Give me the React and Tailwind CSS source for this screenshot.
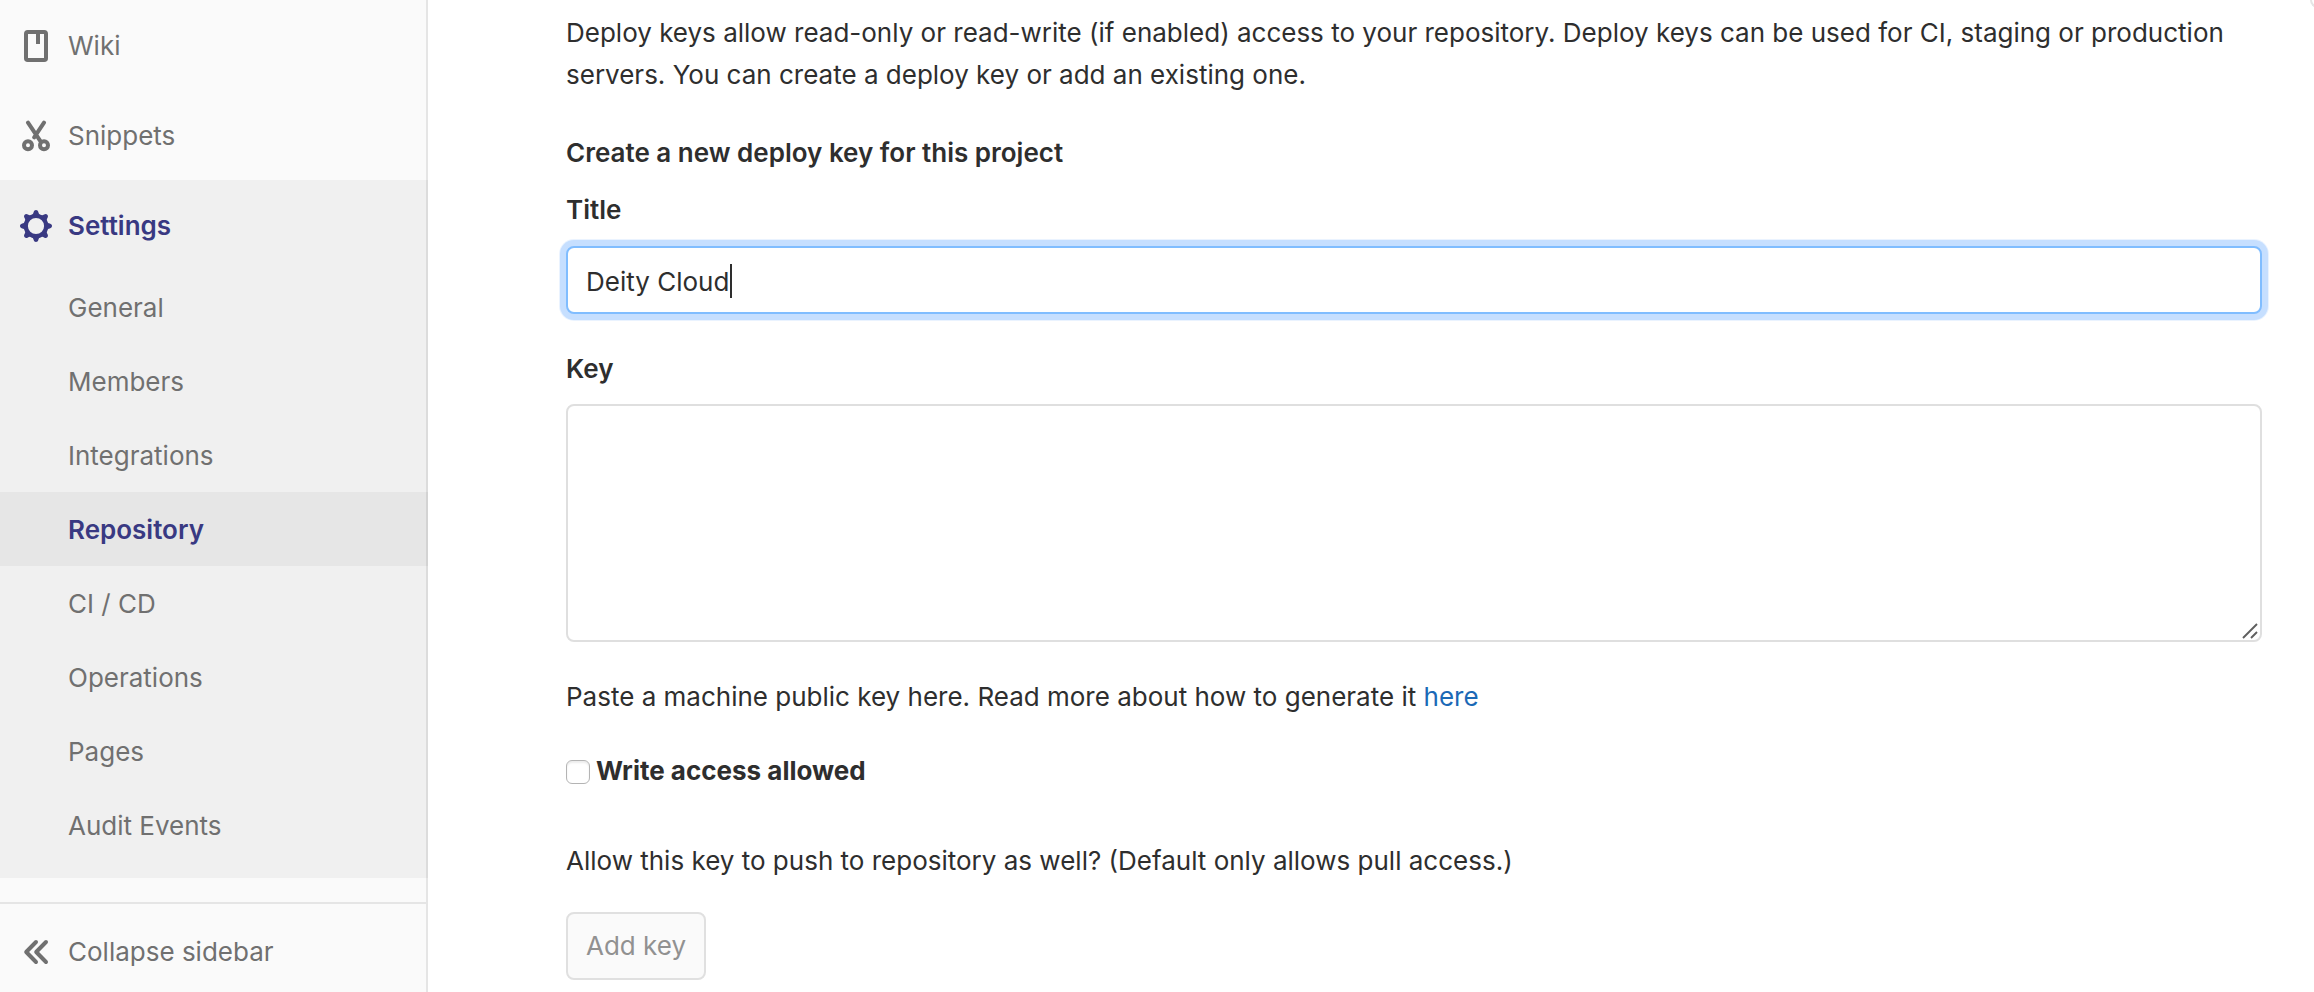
import React, { useState } from "react";

function BookIcon() {
  return (
    <svg viewBox="0 0 16 16" className="size-8 shrink-0" fill="none" aria-hidden="true">
      <rect x="3" y="1" width="10" height="14" rx="0.9" stroke="currentColor" strokeWidth="2" />
      <path d="M8 1.5h2V7H8z" fill="currentColor" />
    </svg>
  );
}

function ScissorsIcon() {
  return (
    <svg viewBox="0 0 16 16" className="size-8 shrink-0" fill="none" stroke="currentColor" aria-hidden="true">
      <path d="M4 1.3 10.2 10.6M12 1.3 7.1 8.7" strokeWidth="2" strokeLinecap="round" />
      <circle cx="4" cy="12.6" r="2" strokeWidth="2" />
      <circle cx="12" cy="12.6" r="2" strokeWidth="2" />
    </svg>
  );
}

const TOOTH_ANGLES = [0, 45, 90, 135, 180, 225, 270, 315];

function GearIcon() {
  return (
    <svg viewBox="0 0 16 16" className="size-8 shrink-0" fill="currentColor" aria-hidden="true">
      <circle cx="8" cy="8" r="5.1" fill="none" stroke="currentColor" strokeWidth="2.1" />
      {TOOTH_ANGLES.map((angle) => (
        <path
          key={angle}
          transform={`rotate(${angle} 8 8)`}
          d="M5.5 2.9C6.3 2.4 6.6 1.9 6.8 1.1 7 .4 7.4 0 8 0s1 .4 1.2 1.1c.2.8.5 1.3 1.3 1.8z"
        />
      ))}
    </svg>
  );
}

function CollapseIcon() {
  return (
    <svg
      viewBox="0 0 16 16"
      className="size-8 shrink-0"
      fill="none"
      stroke="currentColor"
      strokeWidth="2"
      strokeLinecap="round"
      strokeLinejoin="round"
      aria-hidden="true"
    >
      <path d="M8 3 3.1 8 8 13M13 3 8.1 8 13 13" />
    </svg>
  );
}

const SETTINGS_LINKS = [
  "General",
  "Members",
  "Integrations",
  "Repository",
  "CI / CD",
  "Operations",
  "Pages",
  "Audit Events",
];

function NavLink({ icon, label, active }) {
  return (
    <a
      href="#"
      className={`flex h-[90px] items-center gap-4 pt-0.5 pl-5 ${active ? "font-semibold text-[#393982]" : ""}`}
    >
      {icon}
      <span>{label}</span>
    </a>
  );
}

function Sidebar() {
  return (
    <nav className="flex w-[428px] shrink-0 flex-col bg-[#fafafa] text-[#707070] shadow-[inset_-2px_0_0_#e5e5e5]">
      <NavLink icon={<BookIcon />} label="Wiki" />
      <NavLink icon={<ScissorsIcon />} label="Snippets" />
      <div className="bg-black/4 pb-4">
        <NavLink icon={<GearIcon />} label="Settings" active />
        <ul>
          {SETTINGS_LINKS.map((label) => (
            <li key={label}>
              <a
                href="#"
                className={`flex h-[74px] items-center pt-0.5 pl-[68px] ${
                  label === "Repository" ? "bg-black/4 font-semibold text-[#393982]" : ""
                }`}
              >
                {label}
              </a>
            </li>
          ))}
        </ul>
      </div>
      <button
        type="button"
        className="mt-6 mr-0.5 flex h-[90px] items-center gap-4 border-t-2 border-[#e5e5e5] pt-2 pl-5 text-left"
      >
        <CollapseIcon />
        <span>Collapse sidebar</span>
      </button>
    </nav>
  );
}

export default function App() {
  const [title, setTitle] = useState("Deity Cloud");

  return (
    <div className="flex min-h-screen bg-white font-['Inter','Liberation_Sans',sans-serif] text-[26px] leading-[42px] text-[#2e2e2e]">
      <Sidebar />
      <main className="relative min-w-0 flex-1 overflow-hidden pt-3 pr-[52px] pl-[138px]">
        <div
          className="absolute top-0 -right-[60px] h-2 w-16 rounded-bl-lg border-b-2 border-l-2 border-[#e5e5e5]"
          aria-hidden="true"
        />
        <p>
          Deploy keys allow read-only or read-write (if enabled) access to your repository. Deploy keys can be used
          for CI, staging or production servers. You can create a deploy key or add an existing one.
        </p>
        <form onSubmit={(event) => event.preventDefault()}>
          <h5 className="mt-9 font-semibold">Create a new deploy key for this project</h5>

          <label htmlFor="deploy-key-title" className="mt-[15px] block font-semibold">
            Title
          </label>
          <div className="relative mt-[15px]">
            <input
              id="deploy-key-title"
              type="text"
              value={title}
              onChange={(event) => setTitle(event.target.value)}
              className="block h-[68px] w-full rounded-lg border-2 border-[#80bdff] bg-white px-[18px] pt-0.5 shadow-[0_0_0_6px_#c6dfff,0_0_0_7px_#eaf3ff] outline-none"
            />
            <span className="absolute top-[18px] left-[164px] h-[34px] w-0.5 bg-[#2e2e2e]" aria-hidden="true" />
          </div>

          <label htmlFor="deploy-key-key" className="mt-[34px] block font-semibold">
            Key
          </label>
          <div className="relative mt-[14px]">
            <textarea
              id="deploy-key-key"
              className="block h-[238px] w-full resize-none rounded-lg border-2 border-[#dfdfdf] bg-white px-[18px] py-3 outline-none"
            />
            <svg
              viewBox="0 0 16 16"
              className="absolute right-1 bottom-[3px] size-4"
              fill="none"
              stroke="#5f5f5f"
              strokeWidth="1.9"
              aria-hidden="true"
            >
              <path d="M1 15 15 1M9 15l6-6" />
            </svg>
          </div>

          <p className="mt-[34px]">
            Paste a machine public key here. Read more about how to generate it{" "}
            <a href="#" className="text-[#1b69b6]">
              here
            </a>
          </p>

          <div className="mt-8 flex items-center gap-1.5">
            <input
              id="deploy-key-write"
              type="checkbox"
              className="mt-0.5 size-6 appearance-none rounded-md border border-[#b4b4b4] bg-white shadow-[inset_0_2px_2px_#ececec]"
            />
            <label htmlFor="deploy-key-write" className="font-bold">
              Write access allowed
            </label>
          </div>

          <p className="mt-12">
            Allow this key to push to repository as well? (Default only allows pull access.)
          </p>

          <button
            type="submit"
            disabled
            className="mt-[30px] block h-[68px] rounded-lg border-2 border-[#e0e0e0] bg-[#fafafa] px-[18px] text-[#919191]"
          >
            Add key
          </button>
        </form>
      </main>
    </div>
  );
}
